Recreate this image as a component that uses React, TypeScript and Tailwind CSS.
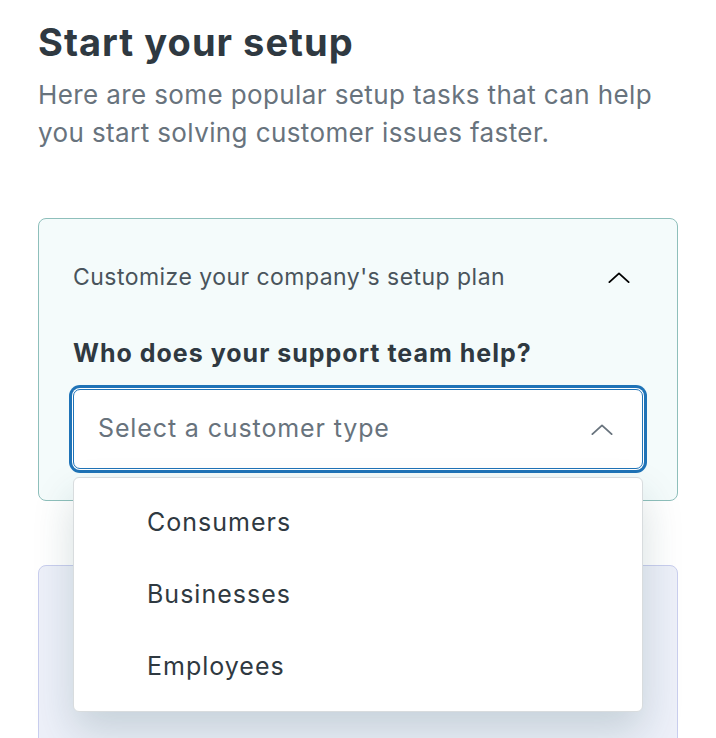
const options = ["Consumers", "Businesses", "Employees"]

function Chevron({ className }: { className?: string }) {
  return (
    <svg viewBox="0 0 24 12" fill="none" className={className}>
      <path d="M1.5 11 L12 1.5 L22.5 11" stroke="currentColor" strokeWidth="2" strokeLinecap="round" strokeLinejoin="round" />
    </svg>
  )
}

export default function App() {
  return (
    <div className="h-[738px] overflow-hidden bg-white px-[38px] pt-[18px] font-['Inter',sans-serif]">
      <h1 className="text-[38px] leading-[48px] font-bold tracking-[0.027em] text-[#2f3941]">Start your setup</h1>
      <p className="mt-[10px] max-w-[640px] text-[26px] leading-[38px] tracking-[0.015em] text-[#68737d]">
        Here are some popular setup tasks that can help you start solving customer issues faster.
      </p>

      <div className="relative mt-[66px]">
        <div className="rounded-[8px] border border-[#8ebfbb] bg-[#f4fbfb] px-[34px] pt-[44px] pb-[31px]">
          <div className="flex items-center justify-between">
            <span className="text-[23px] leading-[28px] tracking-[0.02em] text-[#49545c]">Customize your company's setup plan</span>
            <Chevron className="mr-[12px] h-[11px] w-[24px] text-black" />
          </div>
          <div className="mt-[48px] text-[25px] leading-[28px] font-bold tracking-[0.04em] text-[#2f3941]">
            Who does your support team help?
          </div>
          <div className="mt-[22px] flex h-[80px] items-center justify-between rounded-[7px] border border-[#1f73b7] bg-white pl-[24px] pr-[28px] shadow-[0_0_0_1px_#fff,0_0_0_4px_#1f73b7]">
            <span className="text-[25px] tracking-[0.035em] text-[#68737d]">Select a customer type</span>
            <Chevron className="h-[11px] w-[24px] text-[#68737d]" />
          </div>
        </div>

        <div className="mt-[64px] h-[200px] rounded-[8px] border border-[#c9ceee] bg-[#edf0f9]" />

        <div className="absolute left-[35px] right-[35px] top-[259px] rounded-[6px] border border-[#d8dcde] bg-white pt-[9px] pb-[8px] shadow-[0_20px_40px_rgba(23,73,77,0.18)]">
          {options.map((o) => (
            <div key={o} className="flex h-[72px] items-center pl-[73px] text-[25px] tracking-[0.04em] text-[#2f3941]">
              {o}
            </div>
          ))}
        </div>
      </div>
    </div>
  )
}
